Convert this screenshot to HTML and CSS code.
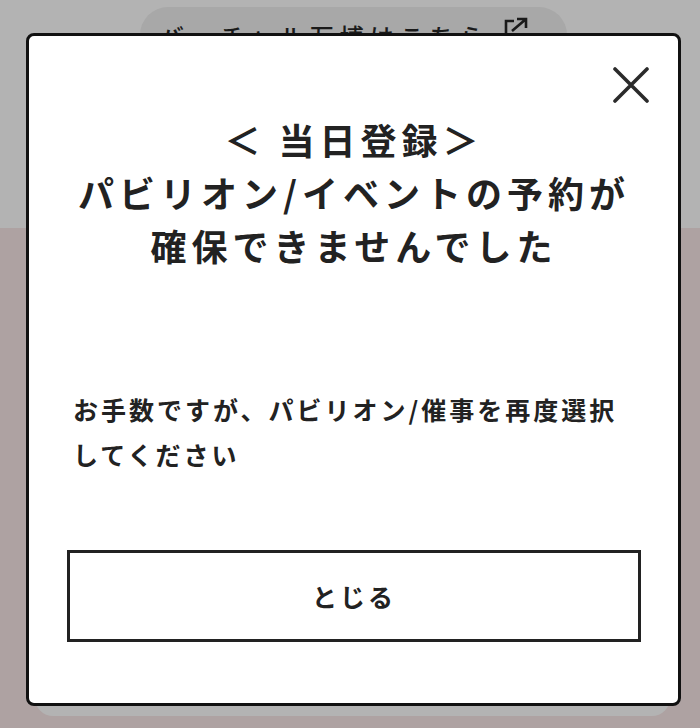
FILE: index.html
```html
<!DOCTYPE html>
<html lang="ja">
<head>
<meta charset="utf-8">
<title>当日登録</title>
<link rel="stylesheet" href="styles.css">
</head>
<body>
<div class="page">
  <header class="top">
    <a class="pill" href="#">バーチャル万博はこちら<svg class="ext" viewBox="0 0 28 28" width="28" height="28"><path d="M4 16 V4 H12" fill="none" stroke="#1a1a1a" stroke-width="2.6"/><path d="M10 14 L24 2 M15 2 H24 V11" fill="none" stroke="#1a1a1a" stroke-width="2.6"/></svg></a>
  </header>
  <section class="pink">
    <div class="card"></div>
  </section>
</div>
<div class="modal" role="dialog">
  <div class="close-row">
    <button class="close" aria-label="閉じる"><svg viewBox="0 0 36 36" width="36" height="36"><path d="M2 2 L34 34 M34 2 L2 34" stroke="#2b2b2b" stroke-width="3.6" stroke-linecap="round" fill="none"/></svg></button>
  </div>
  <h1 class="title">＜ 当日登録＞<br>パビリオン/イベントの予約が<br>確保できませんでした</h1>
  <p class="msg">お手数ですが、パビリオン/催事を再度選択してください</p>
  <button class="btn">とじる</button>
</div>
</body>
</html>
```
FILE: styles.css
```css
* { box-sizing: border-box; }
html, body { margin: 0; padding: 0; }
body {
  width: 700px;
  height: 728px;
  overflow: hidden;
  background: #b3b3b3;
  font-family: "Noto Sans CJK JP", "Noto Sans", sans-serif;
  color: #222;
}
.page { position: relative; height: 728px; }
.top { height: 228px; padding-top: 7px; display: flex; }
.pill {
  display: flex;
  align-items: flex-start;
  margin-left: 140px;
  width: 427px;
  height: 60px;
  padding: 12px 0 0 20px;
  border-radius: 28px;
  background: #a8a8a8;
  color: #1a1a1a;
  text-decoration: none;
  font-size: 24px;
  line-height: 33px;
  letter-spacing: 6px;
  font-weight: 500;
}
.ext { margin-top: -2px; margin-left: 12px; flex: none; }
.pink {
  height: 500px;
  background: #aea2a2;
  padding: 0 30px 0 35px;
}
.card {
  height: 488px;
  background: #b3b3b3;
  border-radius: 0 0 18px 18px;
}
.modal {
  position: fixed;
  left: 26px;
  top: 33px;
  width: 655px;
  background: #fff;
  border: 3px solid #111;
  border-radius: 8px;
  padding: 31px 37px 61px 38px;
  display: flex;
  flex-direction: column;
}
.close-row { display: flex; justify-content: flex-end; margin-right: -8px; height: 36px; }
.close { border: 0; background: none; padding: 0; width: 36px; height: 36px; display: block; }
.close svg { display: block; }
.title {
  margin: 10px 0 0;
  font-size: 36px;
  line-height: 53px;
  font-weight: 700;
  letter-spacing: 5px;
  text-align: center;
  color: #222;
}
.msg {
  margin: 115px 0 0;
  padding: 0 6px;
  font-size: 25px;
  line-height: 45px;
  letter-spacing: 3px;
  font-weight: 700;
  color: #222;
}
.btn {
  margin-top: 73px;
  height: 92px;
  width: 100%;
  border: 3px solid #222;
  background: #fff;
  font-family: inherit;
  font-size: 25px;
  letter-spacing: 3px;
  font-weight: 700;
  color: #222;
  border-radius: 0;
}
```
